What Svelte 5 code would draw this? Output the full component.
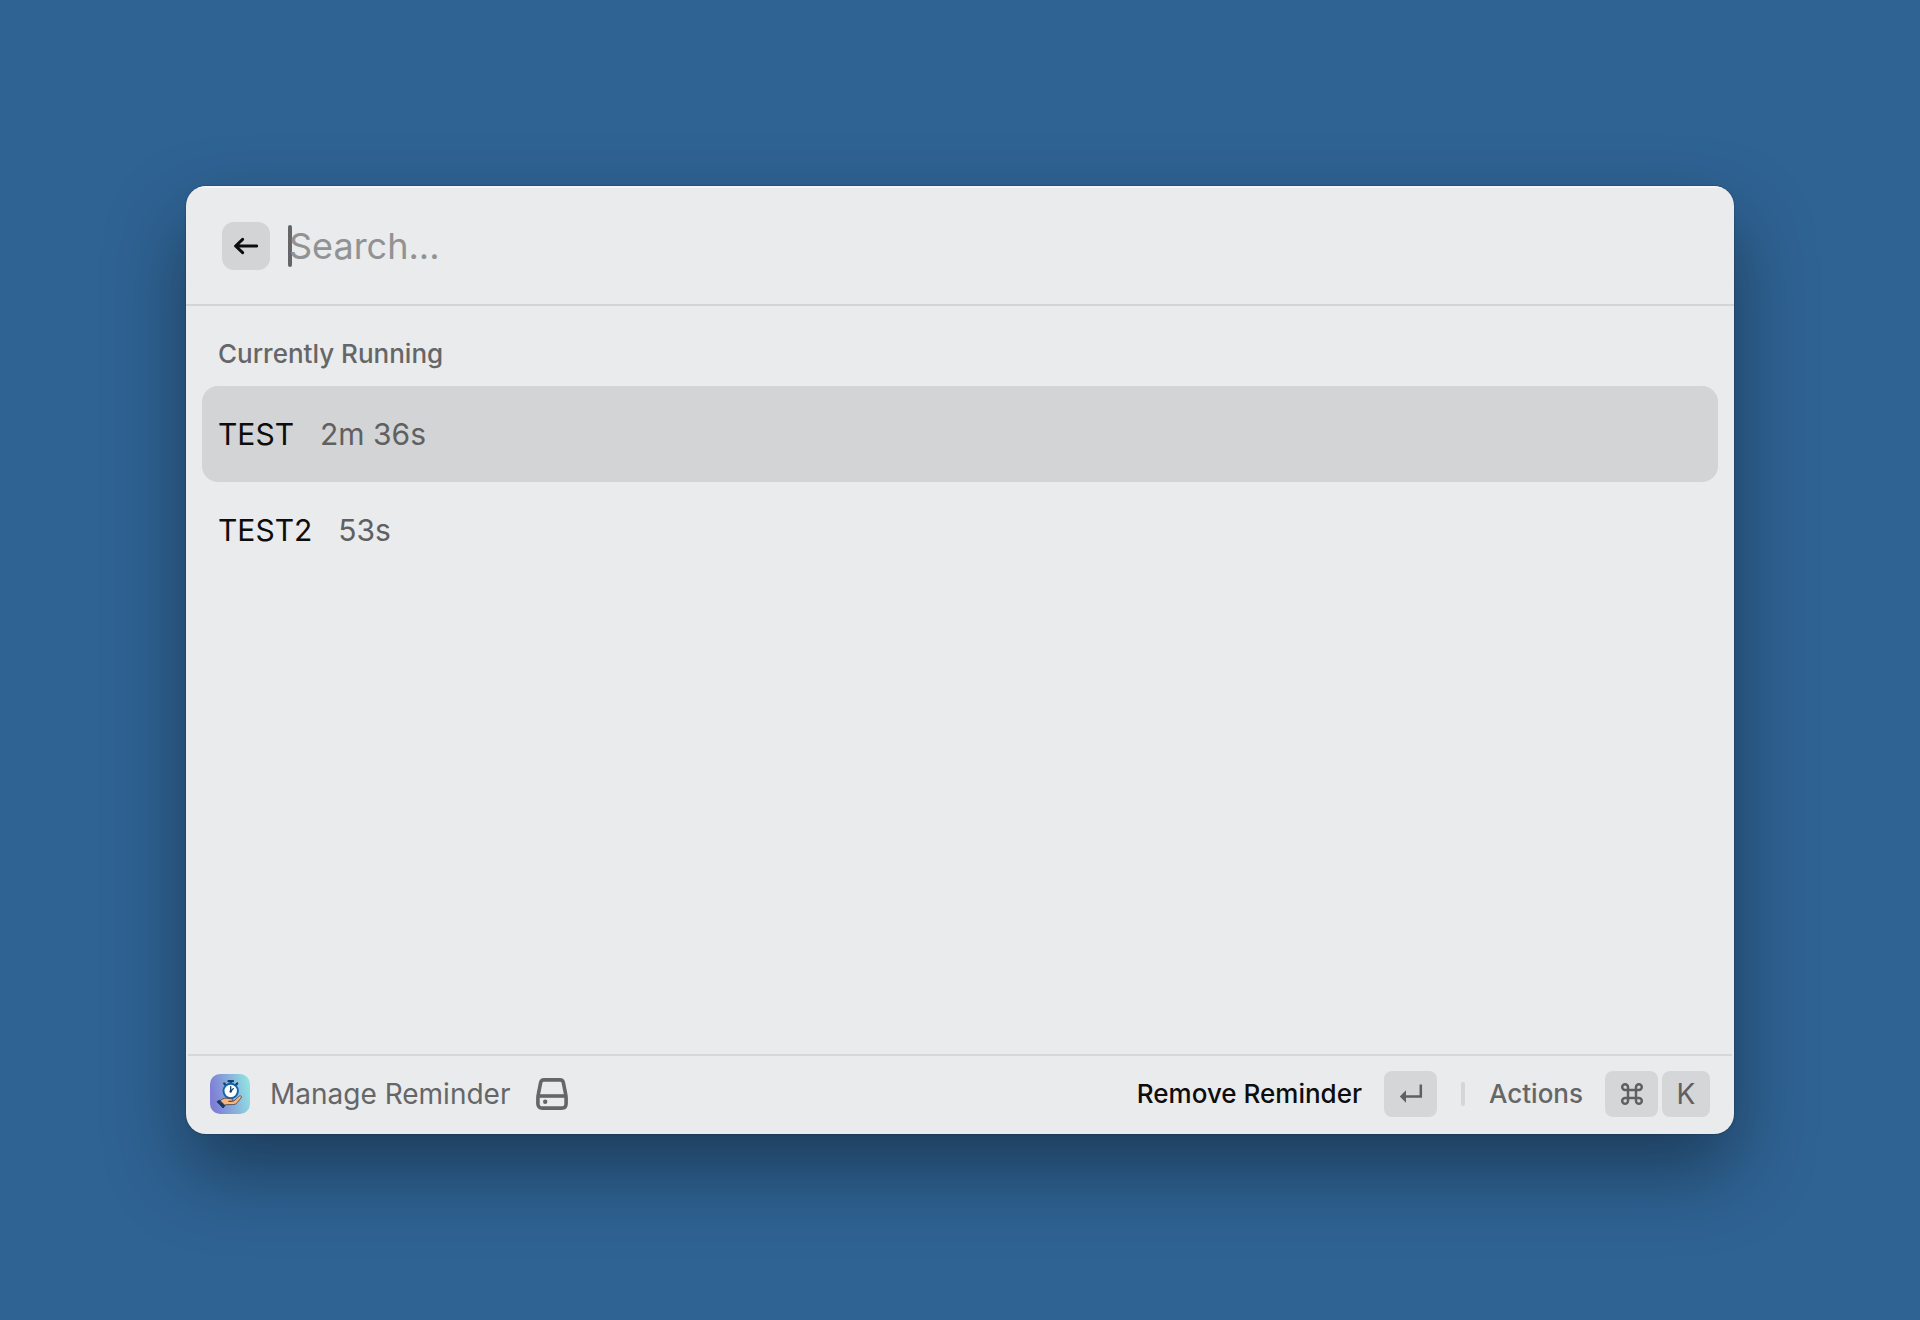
<script>
  let query = $state('');
  let selected = $state(0);
  const reminders = [
    { name: 'TEST', left: '2m 36s' },
    { name: 'TEST2', left: '53s' }
  ];
</script>

<main class="desktop">
  <section class="window">
    <header class="search">
      <button class="back" type="button" aria-label="Back">
        <svg viewBox="0 0 24 24" aria-hidden="true">
          <path d="M22.8 12H1.6M8.6 5.3 1.6 12l7 6.7" />
        </svg>
      </button>
      <span class="caret"></span>
      <input class="query" type="text" aria-label="Search" placeholder="Search..." bind:value={query} />
    </header>

    <div class="list">
      <h2 class="heading">Currently Running</h2>
      <ul class="rows">
        {#each reminders as item, i}
          <li>
            <button type="button" class="row" class:selected={i === selected} onclick={() => (selected = i)}>
              <span class="name">{item.name}</span>
              <span class="left">{item.left}</span>
            </button>
          </li>
        {/each}
      </ul>
    </div>

    <footer class="bar">
      <svg class="logo" viewBox="0 0 40 40" aria-hidden="true">
        <defs>
          <linearGradient id="tile" x1="0" y1="0.2" x2="1" y2="0">
            <stop offset="0" stop-color="#807fd6" />
            <stop offset="0.5" stop-color="#89b3dc" />
            <stop offset="1" stop-color="#92ebe2" />
          </linearGradient>
        </defs>
        <rect width="40" height="40" rx="10" fill="url(#tile)" />
        <path d="M18.5 7.2h4.5M20.7 7v3.5M14.2 9.4l1.8 2M27.2 9.4l-1.8 2" stroke="#12406f" stroke-width="2.2" stroke-linecap="round" fill="none" />
        <circle cx="20.7" cy="17" r="7.2" fill="#fff" stroke="#1565ad" stroke-width="2" />
        <path d="M20.7 12.6v4.6l2.6-2.6" stroke="#12406f" stroke-width="1.3" stroke-linecap="round" fill="none" />
        <circle cx="20.7" cy="17.4" r="1.2" fill="#12406f" />
        <path d="M9.5 27.4c2.1-2 4.2-3.4 6.5-3.2l5 .5c2.4.2 2.5 2.3.6 2.5l-3.1.2 5.4-.3 4.9-4.6c1.6-1.5 3.5-.1 2.3 1.4l-4 4.8c-1.2 1.5-2.7 1.9-4.4 1.9h-5.5c-1.5 0-2.7.5-3.8 1.4z" fill="#fbb47c" stroke="#40404f" stroke-width="0.8" stroke-linejoin="round" />
        <path d="m7 27.7 2.5-1.5 5.4 5.3-1.8 2.5z" fill="#173b63" stroke="#173b63" stroke-linejoin="round" />
      </svg>
      <span class="title">Manage Reminder</span>
      <svg class="drive" viewBox="0 0 32 32" aria-hidden="true">
        <path d="M8 1.900h16c1.700 0 2.900.9 3.300 2.500l2.200 11c.4 1.600.6 2.700.6 4.300v6c0 2.900-1.500 4.400-4.500 4.400H6.400c-3 0-4.500-1.500-4.500-4.400v-6c0-1.600.2-2.700.6-4.300l2.200-11C5.100 2.800 6.300 1.900 8 1.900z" />
        <path d="M2 18h28" />
        <circle cx="9.200" cy="23.700" r="2.200" />
      </svg>

      <button class="action primary" type="button">
        <span>Remove Reminder</span>
        <kbd class="key wide">
          <svg class="enter" viewBox="0 0 24 20" aria-hidden="true">
            <path d="M21.800 .5v12H6" />
            <path class="head" d="M.8 12.500 7 6.300v12.400z" />
          </svg>
        </kbd>
      </button>
      <span class="divider"></span>
      <button class="action" type="button">
        <span>Actions</span>
        <span class="keys">
          <kbd class="key wide">
            <svg class="command" viewBox="0 0 24 24" aria-hidden="true">
              <path d="M8 8h8v8H8zM8 8H5.100A2.900 2.900 0 1 1 8 5.100zM16 8V5.100a2.900 2.900 0 1 1 2.900 2.900zM16 16h2.900a2.900 2.900 0 1 1-2.900 2.900zM8 16v2.900a2.900 2.900 0 1 1-2.900-2.900z" />
            </svg>
          </kbd>
          <kbd class="key">K</kbd>
        </span>
      </button>
    </footer>
  </section>
</main>

<style>
  :global(body) {
    margin: 0;
    background: #2f6394;
  }

  .desktop {
    box-sizing: border-box;
    display: flex;
    min-height: 100vh;
    padding: 186px;
    font-family: Inter, "Liberation Sans", sans-serif;
    color: #0d0d0e;
  }

  .window {
    flex: 1;
    display: flex;
    flex-direction: column;
    min-width: 0;
    overflow: hidden;
    border-radius: 20px;
    background: #e9ebec;
    box-shadow:
      0 0 2px rgba(0, 0, 0, 0.4),
      0 36px 80px rgba(0, 0, 0, 0.4);
  }

  button {
    margin: 0;
    padding: 0;
    border: 0;
    background: none;
    font: inherit;
    color: inherit;
    text-align: left;
  }

  .search {
    display: flex;
    align-items: center;
    padding: 36px 36px 34px;
    border-bottom: 2px solid #d2d4d5;
    box-shadow: inset 0 2px 0 #f4f5f6;
  }

  .back {
    display: grid;
    place-items: center;
    flex: none;
    width: 48px;
    height: 48px;
    border-radius: 12px;
    background: #d3d4d6;
  }

  .back svg {
    width: 24px;
    height: 24px;
    fill: none;
    stroke: #0d0d0e;
    stroke-width: 3;
    stroke-linecap: round;
    stroke-linejoin: round;
  }

  .caret {
    flex: none;
    width: 4px;
    height: 42px;
    margin: 0 -3px 0 18px;
    border-radius: 2px;
    background: #656668;
  }

  .query {
    flex: 1;
    min-width: 0;
    padding: 0;
    border: 0;
    outline: 0;
    background: none;
    font: 400 36px/44px Inter, "Liberation Sans", sans-serif;
    color: #0d0d0e;
  }

  .query::placeholder {
    color: #919294;
    opacity: 1;
  }

  .list {
    flex: 1;
    padding: 32px 16px;
  }

  .heading {
    margin: 0 0 16px;
    padding: 0 16px;
    font-size: 26px;
    line-height: 32px;
    font-weight: 500;
    color: #656668;
  }

  .rows {
    margin: 0;
    padding: 0;
    list-style: none;
  }

  .row {
    display: flex;
    align-items: center;
    gap: 26px;
    width: 100%;
    height: 96px;
    padding: 0 16px;
    border-radius: 16px;
    font-size: 30px;
    line-height: 36px;
  }

  .selected {
    background: #d3d4d6;
  }

  .left {
    color: #5f6062;
  }

  .bar {
    display: flex;
    align-items: center;
    margin: 0 2px;
    padding: 15px 22px 17px;
    border-top: 2px solid #d5d7d8;
  }

  .logo {
    flex: none;
    width: 40px;
    height: 40px;
  }

  .title {
    margin: 0 26px 0 20px;
    font-size: 28px;
    line-height: 34px;
    color: #656668;
  }

  .drive {
    width: 32px;
    height: 32px;
    margin-right: auto;
    fill: none;
    stroke: #656668;
    stroke-width: 3.6;
  }

  .drive circle {
    fill: #656668;
    stroke: none;
  }

  .action {
    display: flex;
    align-items: center;
    gap: 22px;
    font-size: 26px;
    line-height: 32px;
    font-weight: 500;
    color: #656668;
  }

  .primary {
    color: #0d0d0e;
  }

  .divider {
    width: 4px;
    height: 24px;
    margin: 0 24px;
    border-radius: 2px;
    background: #d5d6d8;
  }

  .keys {
    display: flex;
    gap: 4px;
  }

  .key {
    display: grid;
    place-items: center;
    width: 48px;
    height: 46px;
    border-radius: 8px;
    background: #d5d6d8;
    font: 400 28px/34px Inter, "Liberation Sans", sans-serif;
    color: #5f6062;
  }

  .wide {
    width: 53px;
  }

  .enter {
    width: 24px;
    height: 20px;
    fill: none;
    stroke: #5f6062;
    stroke-width: 2.5;
  }

  .enter .head {
    fill: #5f6062;
    stroke: none;
  }

  .command {
    width: 24px;
    height: 24px;
    fill: none;
    stroke: #5f6062;
    stroke-width: 2.5;
  }
</style>
